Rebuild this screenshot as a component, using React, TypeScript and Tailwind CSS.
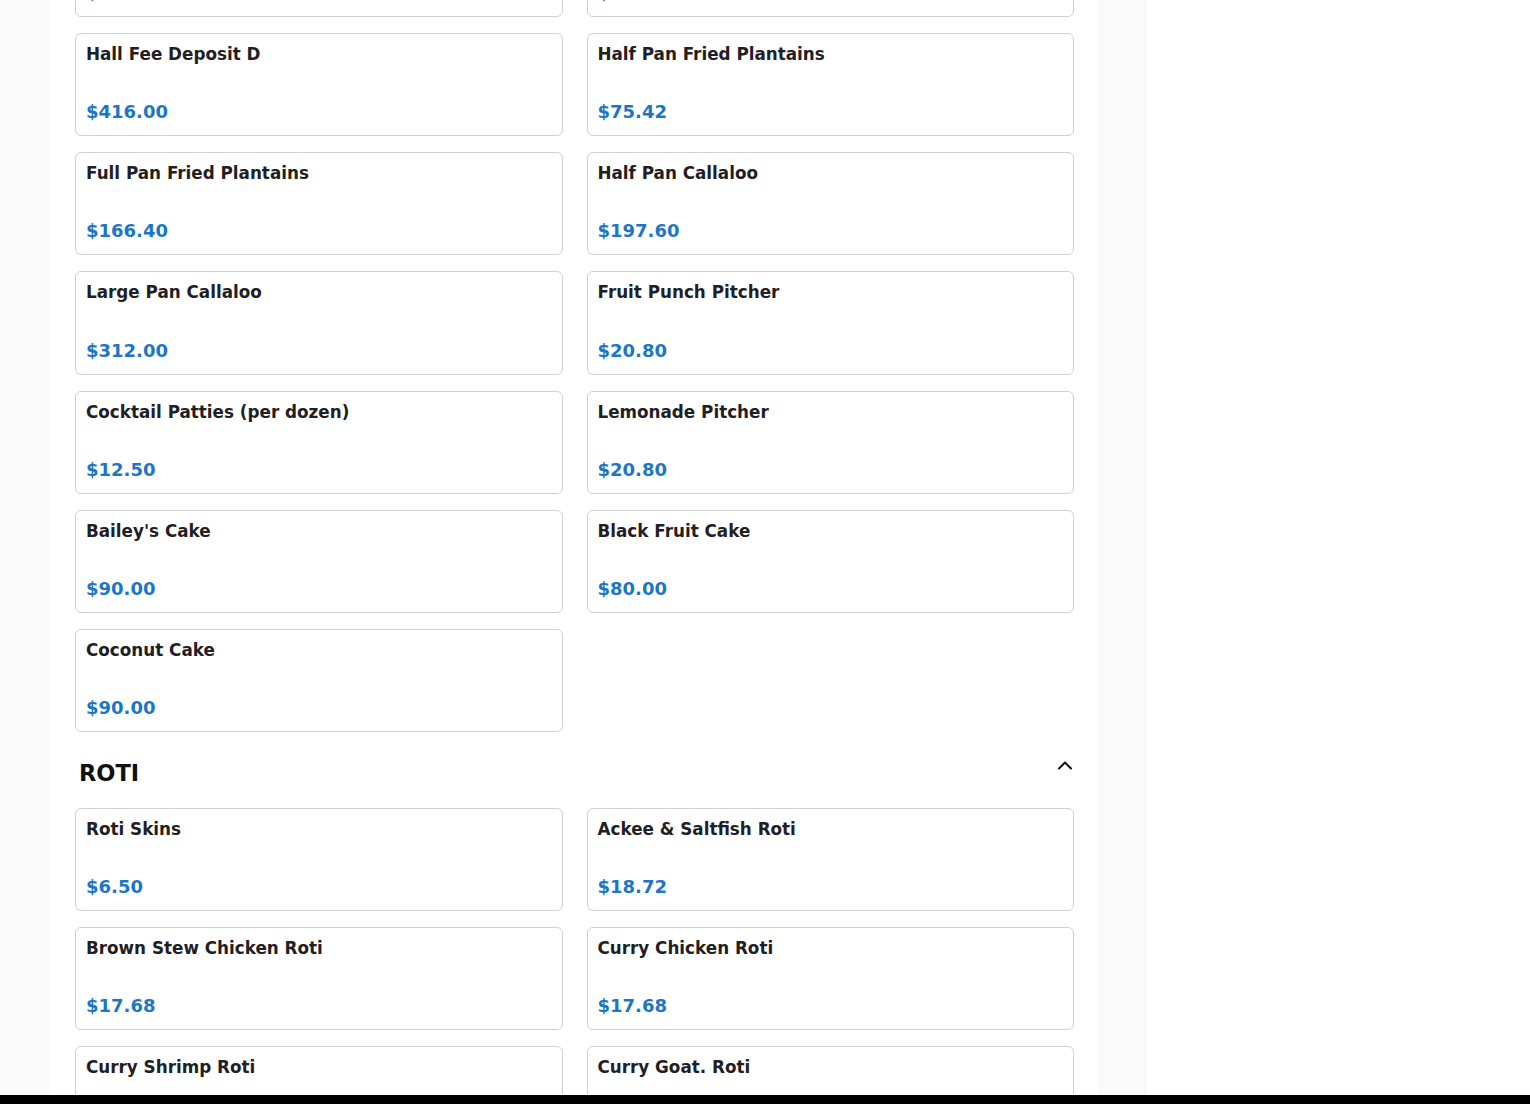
import React from "react";

type Item = { name: string; price: string };

const ABOVE: Item[] = [
  { name: "Hall Fee Deposit C", price: "$416.00" },
  { name: "Quarter Pan Fried Plantains", price: "$41.60" },
];

const EXTRAS: Item[] = [
  { name: "Hall Fee Deposit D", price: "$416.00" },
  { name: "Half Pan Fried Plantains", price: "$75.42" },
  { name: "Full Pan Fried Plantains", price: "$166.40" },
  { name: "Half Pan Callaloo", price: "$197.60" },
  { name: "Large Pan Callaloo", price: "$312.00" },
  { name: "Fruit Punch Pitcher", price: "$20.80" },
  { name: "Cocktail Patties (per dozen)", price: "$12.50" },
  { name: "Lemonade Pitcher", price: "$20.80" },
  { name: "Bailey's Cake", price: "$90.00" },
  { name: "Black Fruit Cake", price: "$80.00" },
  { name: "Coconut Cake", price: "$90.00" },
];

const ROTI: Item[] = [
  { name: "Roti Skins", price: "$6.50" },
  { name: "Ackee & Saltfish Roti", price: "$18.72" },
  { name: "Brown Stew Chicken Roti", price: "$17.68" },
  { name: "Curry Chicken Roti", price: "$17.68" },
  { name: "Curry Shrimp Roti", price: "$20.80" },
  { name: "Curry Goat. Roti", price: "$20.80" },
];

function ItemCard({ item }: { item: Item }) {
  return (
    <div className="flex h-[103.2px] flex-col justify-between rounded-md border border-[#d0d0d0] bg-white px-[10px] pt-[8px] pb-[10px]">
      <span className="text-[16.8px] font-bold leading-[1.5] text-[#1f2024]">
        {item.name}
      </span>
      <span className="text-[18px] font-bold leading-[1.5] text-[#1d76c3]">
        {item.price}
      </span>
    </div>
  );
}

function ItemGrid({ items }: { items: Item[] }) {
  return (
    <div className="grid grid-cols-2 gap-x-6 gap-y-4">
      {items.map((it) => (
        <ItemCard key={it.name} item={it} />
      ))}
    </div>
  );
}

function SectionHeader({ title }: { title: string }) {
  return (
    <div className="mt-6 mb-[17.6px] flex h-[34px] items-start justify-between pl-1">
      <h2 className="text-[22.5px] font-bold leading-[34px] text-[#111]">
        {title}
      </h2>
      <svg
        width="16"
        height="16"
        viewBox="0 0 16 16"
        fill="none"
        stroke="#111"
        strokeWidth="2"
        strokeLinecap="round"
        strokeLinejoin="round"
        className="mt-[2px] mr-[1px]"
      >
        <polyline points="2,10.5 8,4.5 14,10.5" />
      </svg>
    </div>
  );
}

export default function App() {
  return (
    <div
      className="flex h-screen overflow-hidden bg-[#fafafa]"
      style={{ fontFamily: '"DejaVu Sans", Verdana, sans-serif' }}
    >
      <div className="w-[50px] shrink-0 bg-[#fafafa]" />
      <main className="w-[1048px] shrink-0 bg-white pl-[25px] pr-[24px]">
        <div className="-mt-[86.2px] flex flex-col gap-4">
          <ItemGrid items={ABOVE} />
          <ItemGrid items={EXTRAS} />
        </div>
        <SectionHeader title="ROTI" />
        <div className="[&>div]:gap-y-[15.8px]">
          <ItemGrid items={ROTI} />
        </div>
      </main>
      <div className="w-[48px] shrink-0 border-r border-[#efefef] bg-[#fafafa]" />
      <aside className="flex-1 bg-white" />
      <div className="fixed right-0 bottom-0 left-0 h-[9px] bg-black" />
    </div>
  );
}
